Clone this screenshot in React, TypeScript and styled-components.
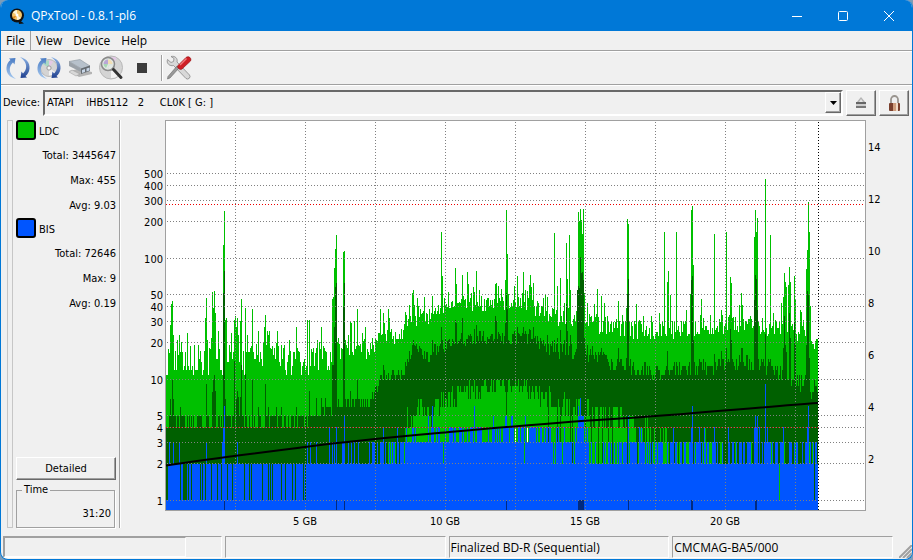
import React from "react";
import styled, { createGlobalStyle } from "styled-components";

const Global = createGlobalStyle`
  * { box-sizing: border-box; }
  html, body { margin: 0; padding: 0; }
  body { background: #7d9cb8; font: 11px/14px "DejaVu Sans Condensed", "Noto Sans", sans-serif; color: #000; }
  button, select { font: inherit; color: inherit; }
`;

const Window = styled.div`
  min-height: 100vh;
  display: flex;
  flex-direction: column;
  background: #f0f0f0;
  border: 1px solid #0078d7;
  border-top: 0;
  border-radius: 8px;
  overflow: hidden;
`;

const TitleBar = styled.header`
  display: flex;
  align-items: center;
  height: 31px;
  padding-left: 8px;
  background: #0078d7;
  color: #fff;
  font: 12px/16px "Open Sans", sans-serif;
`;
const AppTitle = styled.h1`
  flex: 1;
  margin: 0 0 0 6px;
  font: inherit;
`;
const CaptionButton = styled.button`
  width: 46px;
  height: 31px;
  padding: 0;
  border: 0;
  background: none;
  display: grid;
  place-items: center;
`;

const MenuBar = styled.nav`
  display: flex;
  height: 21px;
  border-bottom: 1px solid #fff;
  box-shadow: inset 0 -1px #a0a0a0;
`;
const MenuItem = styled.button<{ $framed?: boolean }>`
  border: 0;
  border-right: 1px solid ${(p) => (p.$framed ? "#a0a0a0" : "transparent")};
  background: none;
  padding: 0 5px;
  height: 19px;
  font: 12px/18px "Open Sans", sans-serif;
`;

const ToolBar = styled.div`
  display: flex;
  align-items: center;
  height: 33px;
  padding-left: 1px;
  border-bottom: 1px solid #a0a0a0;
`;
const ToolButton = styled.button`
  width: 31px;
  height: 30px;
  padding: 0;
  border: 0;
  background: none;
  display: grid;
  place-items: center;
`;
const ToolSeparator = styled.span`
  width: 2px;
  height: 26px;
  margin: 0 0 0 4px;
  border-left: 1px solid #a0a0a0;
  border-right: 1px solid #fff;
`;

const DeviceRow = styled.div`
  display: flex;
  align-items: center;
  height: 35px;
  padding: 0 3px 0 2px;
  border-top: 1px solid #fff;
`;
const DeviceLabel = styled.label`
  width: 40px;
`;
const Combo = styled.div`
  position: relative;
  flex: 1;
  height: 26px;
  border: 2px solid;
  border-color: #696969 #fff #fff #696969;
`;
const DeviceSelect = styled.select`
  appearance: none;
  display: block;
  width: 100%;
  height: 22px;
  padding: 0 20px 0 2px;
  border: 0;
  border-radius: 0;
  background: #f0f0f0;
  outline: 0;
`;
const ComboArrow = styled.span`
  position: absolute;
  top: 0;
  right: 0;
  width: 16px;
  height: 21px;
  background: #f0f0f0;
  border: 1px solid;
  border-color: #fff #696969 #696969 #fff;
  box-shadow: inset -1px -1px #a0a0a0;
  display: grid;
  place-items: center;
  pointer-events: none;
`;
const PushButton = styled.button<{ $wide?: boolean }>`
  width: ${(p) => (p.$wide ? "100px" : "30px")};
  height: ${(p) => (p.$wide ? "23px" : "26px")};
  margin-left: ${(p) => (p.$wide ? "0" : "3px")};
  padding: 0;
  display: grid;
  place-items: center;
  background: #f0f0f0;
  border: 1px solid;
  border-color: #fff #696969 #696969 #fff;
  box-shadow: inset -1px -1px #a0a0a0;
`;

const Main = styled.main`
  flex: 1;
  display: flex;
  align-items: stretch;
`;
const Handle = styled.div`
  width: 6px;
  margin-left: 6px;
  border: 1px solid #c6c6c6;
`;
const Side = styled.aside`
  display: flex;
  flex-direction: column;
  width: 107px;
  padding: 0 3px;
  border-right: 1px solid #a0a0a0;
  box-shadow: 1px 0 #fff;
`;
const Metric = styled.section`
  height: 98px;
`;
const MetricName = styled.h2`
  display: flex;
  align-items: center;
  gap: 3px;
  height: 20px;
  margin: 0 0 3px;
  font: inherit;
  line-height: 18px;
`;
const MetricLabel = styled.span`
  padding-top: 3px;
`;
const Swatch = styled.span<{ $color: string }>`
  width: 20px;
  height: 20px;
  border: 2px solid #000;
  border-radius: 3px;
  background: ${(p) => p.$color};
`;
const MetricValue = styled.p`
  margin: 0;
  height: 25px;
  line-height: 25px;
  text-align: right;
`;
const SideFooter = styled.div`
  margin-top: auto;
`;
const TimeBox = styled.fieldset`
  margin: 3px 1px 0 0;
  height: 45px;
  padding: 10px 3px 0;
  border: 1px solid #a0a0a0;
  box-shadow: 1px 1px #fff;
  text-align: right;
  legend {
    margin-left: 2px;
    padding: 0 2px;
    text-align: left;
  }
`;
const ChartArea = styled.div`
  flex: 1;
  min-width: 0;
  padding-left: 2px;
`;
const ChartSvg = styled.svg`
  display: block;
  width: 100%;
  height: auto;
  font: 11px "DejaVu Sans Condensed", "Noto Sans", sans-serif;
`;

const StatusBar = styled.footer`
  display: flex;
  gap: 3px;
  height: 23px;
  margin-top: 8px;
  padding: 0 0 1px 2px;
`;
const StatusCell = styled.div`
  flex: 1;
  padding: 0 1px;
  font: 12px/21px "Open Sans", sans-serif;
  white-space: nowrap;
  border: 1px solid;
  border-color: #a0a0a0 #fff #fff #a0a0a0;
`;
const ProgressCell = styled(StatusCell)`
  padding: 0;
`;
const ProgressTrack = styled.div`
  width: 84%;
  height: 20px;
  border: 1px solid;
  border-color: #a0a0a0 #fff #fff #a0a0a0;
`;
const Grip = styled.div`
  width: 16px;
  display: flex;
  align-items: flex-end;
  justify-content: flex-end;
`;

/* ---- chart data ---- */

const X0 = 166;
const X1 = 818;
const FLOOR = 510;
const GREEN = "#00c000";
const DARK = "#006000";
const BLUE = "#0055ff";

type Knot = [number, number, number];
const noise = (x: number, seed: number) => {
  const v = Math.sin(x * 12.9898 + seed * 78.233) * 43758.5453;
  return v - Math.floor(v);
};
const along = (knots: Knot[], x: number) => {
  let i = 0;
  while (i < knots.length - 2 && x > knots[i + 1][0]) i++;
  const [ax, ay, aj] = knots[i];
  const [bx, by, bj] = knots[i + 1];
  const t = (x - ax) / (bx - ax);
  return [ay + (by - ay) * t, aj + (bj - aj) * t];
};
/* Error counts are whole numbers, so bar tops snap to the log scale of integers. */
const snap = (y: number) => 501 - 121 * Math.log10(Math.max(1, Math.round(10 ** ((501 - y) / 121))));
const jittered = (knots: Knot[], x: number, seed: number) => {
  const [y, j] = along(knots, x);
  return snap(y + (noise(x, seed) * 2 - 1) * j);
};
const parse = (text: string) => {
  const out: Record<number, number> = {};
  text.trim().split(/\s+/).forEach((pair) => {
    const [x, y] = pair.split(":").map(Number);
    out[x] = y;
  });
  return out;
};
const expand = (text: string) => {
  const out = new Set<number>();
  text.trim().split(/\s+/).forEach((part) => {
    const [a, b] = part.split("-").map(Number);
    for (let x = a; x <= (b || a); x++) out.add(x);
  });
  return out;
};

const ldcPeaks = parse(`
169:353 170:325 171:304 172:301 173:335 175:351 177:340 179:335 181:342 187:333 194:345 198:345 200:351
204:351 205:318 206:298 207:340 209:348 211:338 212:292 213:308 214:291 215:313 218:331 223:245 224:211
225:320 226:318 229:345 231:333 234:320 235:316 236:327 237:318 238:335 240:321 241:299 243:351 245:308
247:335 250:348 252:309 258:331 263:343 264:327 265:315 266:345 267:331 268:335 269:331 270:348 274:348
276:343 277:331 281:345 283:348 284:345 289:340 290:351 296:327 297:348 298:351 307:320 309:320 313:348
315:353 316:348 317:340 319:342 321:327 324:348 325:351 332:299 333:297 334:268 335:249 336:235 337:342
338:338 341:348 343:252 344:251 345:340 346:345 347:348 348:335 350:321 351:323 354:321 357:309 358:345
362:333 363:341 365:327 370:343 372:338 373:345 376:340 378:333 379:333 380:309 381:335 383:313 384:323
388:309 389:318 391:329 401:329 405:312 406:315 409:305 412:293 413:290 414:305 415:316 417:298 418:306
420:309 422:313 424:297 426:313 429:309 432:296 435:308 438:305 441:232 442:276 444:298 446:304 448:292
455:268 456:284 462:275 463:296 467:272 468:284 471:293 473:287 474:292 476:271 479:290 495:284 496:283
498:286 501:289 502:297 505:280 506:210 507:254 508:294 514:286 517:276 518:297 522:293 523:272 525:290
527:291 529:285 530:275 531:287 533:283 543:298 545:295 547:297 553:309 554:233 557:286 560:278 561:316
563:311 564:303 566:243 567:279 569:235 570:290 574:315 577:290 578:212 579:221 580:209 581:220 582:234
583:209 584:293 587:303 594:304 597:289 601:296 604:303 607:316 611:321 618:301 622:315 626:308 627:219
628:224 636:304 639:320 643:316 651:316 659:313 662:321 664:232 667:282 668:271 670:295 672:321 676:232
681:321 686:310 690:294 691:210 692:206 693:265 700:315 701:299 703:318 710:315 714:234 721:310 722:315
726:232 729:315 730:277 731:283 732:318 739:305 741:293 742:305 750:316 754:237 755:210 756:232 757:218
762:318 765:179 770:235 773:313 775:320 781:303 783:297 784:273 785:282 786:287 788:285 789:267 790:282
794:276 795:299 800:310 801:312 803:320 806:269 807:250 808:202 809:232 810:306`);

const ldcTop: Knot[] = [
  [166, 361, 17], [320, 361, 16], [345, 353, 12], [371, 347, 10], [379, 336, 7], [402, 335, 8],
  [410, 318, 9], [430, 317, 10], [442, 307, 8], [470, 305, 8], [520, 302, 7], [538, 309, 8],
  [560, 317, 10], [590, 321, 10], [610, 327, 9], [650, 331, 10], [700, 328, 9], [745, 323, 8],
  [780, 331, 10], [800, 333, 10], [814, 346, 8], [818, 332, 4],
];

const avgPeaks = parse(`
170:399 172:380 173:399 180:407 206:384 212:392 213:380 214:375 215:391 223:293 224:271 225:399 234:361
236:399 237:391 238:397 240:397 241:365 245:374 252:380 258:407 265:384 268:407 276:407 281:407 296:407
309:391 316:398 321:398 325:398 332:365 333:365 334:327 335:287 336:283 343:307 344:283 350:391 357:380
380:375 383:365 384:370 388:373 409:351 412:345 413:340 414:345 417:349 420:348 424:351 432:340 441:327
442:340 448:340 455:320 456:323 461:333 462:318 468:335 474:329 476:325 479:331 480:331 483:331 487:337
492:334 495:316 496:321 498:332 502:333 505:323 506:293 507:309 508:340 514:331 517:327 518:333 522:333
523:327 525:331 529:329 530:330 533:327 534:338 540:338 543:340 547:335 554:340 557:338 560:330 564:340
566:304 567:331 570:335 577:290 578:286 579:288 580:257 581:273 582:272 583:280 584:338 587:345 601:348
604:354 618:348 626:358 627:294 628:279 667:351 691:280 692:276 693:340 714:354 721:351 726:348 730:329
731:340 741:348 742:348 754:300 755:275 756:279 757:310 765:334 783:348 784:316 785:345 786:352 789:313
790:338 794:321 795:345 806:345 807:291 808:295 809:358`);

const avgTop: Knot[] = [
  [166, 422, 7], [305, 422, 6], [318, 413, 5], [350, 402, 6], [370, 400, 5], [378, 386, 7],
  [386, 378, 6], [402, 374, 6], [412, 347, 7], [426, 358, 9], [438, 347, 7], [452, 342, 5],
  [480, 339, 6], [530, 339, 6], [550, 348, 9], [575, 353, 10], [592, 352, 10], [612, 364, 8],
  [655, 372, 8], [690, 369, 9], [740, 362, 7], [765, 365, 9], [782, 374, 6], [800, 382, 9],
  [818, 390, 9],
];

const minTop: Knot[] = [
  [402, 438, 6], [407, 418, 12], [418, 405, 12], [432, 415, 14], [440, 402, 10], [450, 397, 10],
  [462, 391, 10], [485, 388, 10], [515, 385, 7], [535, 392, 10], [550, 399, 13], [568, 409, 14],
  [590, 411, 14],
];

const bisPeaks = parse(`
169:442 173:442 179:442 206:442 222:442 223:427 224:406 237:442 307:442 310:442 316:442 329:427 332:442
334:442 336:427 342:442 343:442 344:416 348:442 351:442 354:442 358:442 369:442 372:442 373:442 374:442
377:442 380:442 381:442 382:442 383:427 385:442 397:427 428:416 432:406 474:406 493:416 505:416 506:416
511:416 512:416 525:416 577:427 578:406 579:416 580:398 581:416 582:416 583:416 628:416 639:427 641:427
673:427 691:427 692:406 699:427 704:427 714:427 728:427 754:427 755:416 756:427 757:416 759:427 765:384
767:427 783:427 807:427 808:406`);

const darkGaps = expand(`166-167 180 183-186 188 191 200 202 205 211 217 221 227 232 244 249 251 262 268
270 272 281 285 292 295 303 305 814`);
const greenGaps = expand("386-388 390 392 395-397 399 404 443 524 553 555 562 572 574 589-590 594 597 599-601");

const bar = (x: number, top: number, bottom: number) => `M${x} ${Math.round(top)}h1V${Math.round(bottom)}h-1z`;

function minLevel(x: number) {
  const r = noise(x, 5);
  const s = noise(x, 6);
  if (x < 385) return null;
  if (x < 404) return r > 0.4 ? 442 : null;
  if (x < 590) {
    if (x === 506 || (x > 535 && r > 0.85)) return null;
    return jittered(minTop, x, 4);
  }
  if (x < 622) return s > 0.62 ? 407 : r > 0.92 ? null : 428;
  if (x < 634) return s > 0.5 ? 416 : r > 0.8 ? null : 428;
  if (x < 655) return s > 0.8 ? 416 : r > 0.55 ? 428 : r > 0.2 ? 442 : null;
  if (x < 672) return s > 0.75 ? 428 : r > 0.2 ? 442 : null;
  if (x < 725) return s > 0.88 ? 428 : r > 0.5 ? 442 : null;
  return r > 0.88 ? 442 : null;
}

function bisLevel(x: number) {
  const r = noise(x, 7);
  if (darkGaps.has(x) || x === 779) return 500;
  if (greenGaps.has(x) || x < 386) return 464;
  if (x >= 589) return r > 0.5 ? 442 : 464;
  if (x < 406) return 442;
  if (x < 437 || x >= 545) return r > 0.8 ? 427 : 442;
  return r > 0.5 ? 427 : 442;
}

function buildLayers() {
  const ldc: string[] = [];
  const avg: string[] = [];
  const min: string[] = [];
  const bis: string[] = [];
  for (let x = X0; x < X1; x++) {
    ldc.push(bar(x, ldcPeaks[x] ?? jittered(ldcTop, x, 1), FLOOR));
    const quiet = noise(x, 2) > 0.48 ? 416 : 428;
    avg.push(bar(x, avgPeaks[x] ?? (x < 312 ? quiet : jittered(avgTop, x, 2)), FLOOR));
    const low = minLevel(x);
    if (low !== null) min.push(bar(x, low, 464));
    bis.push(bar(x, bisPeaks[x] ?? bisLevel(x), FLOOR));
  }
  min.push(bar(779, 464, 500));
  return { ldc: ldc.join(""), avg: avg.join(""), min: min.join(""), bis: bis.join("") };
}
const layers = buildLayers();

const levels: [number, string][] = [
  [174, "500"], [186, "400"], [201, "300"], [222, "200"], [259, "100"], [295, "50"], [307, "40"],
  [322, "30"], [343, "20"], [380, "10"], [416, "5"], [428, "4"], [443, "3"], [464, "2"], [501, "1"],
];
const speeds = [14, 12, 10, 8, 6, 4, 2];
const columns = [235, 305, 375, 445, 515, 585, 655, 725, 795];

function Chart() {
  return (
    <ChartSvg viewBox="122 120 790 408" role="img" aria-label="LDC and BIS error rates over disc capacity">
      <g shapeRendering="crispEdges">
        <rect x="165" y="120" width="701" height="391" fill="#a0a0a0" />
        <rect x="166" y="121" width="699" height="389" fill="#fff" />
        <path d={layers.ldc} fill={GREEN} />
        <path d={layers.avg} fill={DARK} />
        <path d={layers.min} fill={GREEN} />
        <path d={layers.bis} fill={BLUE} />
        <path d="M515 428h1v14h-1zM527 428h1v14h-1z" fill="#fff" />
        <path
          d="M224 500h1v10h-1zM336 500h1v10h-1zM344 500h1v10h-1zM506 500h1v10h-1zM578 500h6v10h-6zM628 500h1v10h-1zM691 500h2v10h-2zM755 500h2v10h-2z"
          fill="#002a80"
        />
        <g stroke="#808080" strokeDasharray="1 2">
          {levels.map(([y]) => (
            <line key={y} x1="167" x2="865" y1={y - 0.5} y2={y - 0.5} />
          ))}
          {columns.map((x) => (
            <line key={x} x1={x + 0.5} x2={x + 0.5} y1="122" y2="510" />
          ))}
        </g>
        <g stroke="#f00000" strokeDasharray="1 2">
          <line x1="166" x2="865" y1="204.5" y2="204.5" />
          <line x1="166" x2="818" y1="427.5" y2="427.5" strokeOpacity="0.8" />
        </g>
        <line x1="818.5" x2="818.5" y1="122" y2="510" stroke="#000" strokeDasharray="1 2" />
      </g>
      <path
        d="M166 465.5C210 459 250 454 305 447S395 437 445 432.500S560 422 620 418.500S760 407 818 403"
        fill="none"
        stroke="#000"
        strokeWidth="2"
      />
      <g textAnchor="end">
        {levels.map(([y, label]) => (
          <text key={label} x="163" y={y + 4}>{label}</text>
        ))}
      </g>
      {speeds.map((s, i) => (
        <text key={s} x="868" y={151 + i * 52}>{s}</text>
      ))}
      <g textAnchor="middle">
        {[5, 10, 15, 20].map((gb) => (
          <text key={gb} x={165 + gb * 28} y="525">{gb} GB</text>
        ))}
      </g>
    </ChartSvg>
  );
}

/* ---- icons ---- */

const AppIcon = () => (
  <svg width="16" height="16" viewBox="0 0 16 16">
    <circle cx="8" cy="7.500" r="7" fill="#111" />
    <path d="M9 11l6 4.500-5 .5z" fill="#111" />
    <circle cx="8" cy="7" r="5" fill="#f5c66a" />
    <path d="M8 7L4 4.500a5 5 0 0 1 4-2.500zM8 7l4 3a5 5 0 0 1-4 2z" fill="#fff3d6" />
    <path d="M8 7L5 11A5 5 0 0 1 3.400 9z" fill="#e48b20" />
    <circle cx="8" cy="7" r="1.500" fill="#fff" />
  </svg>
);

const Arrows = ({ id }: { id: string }) => (
  <>
    <defs>
      <linearGradient id={`${id}-left`} x1="0" y1="1" x2="0" y2="0">
        <stop offset="0" stopColor="#a9cbf0" />
        <stop offset="1" stopColor="#4a7cc4" />
      </linearGradient>
      <linearGradient id={`${id}-right`} x1="0" y1="0" x2="0" y2="1">
        <stop offset="0" stopColor="#8db4e6" />
        <stop offset="1" stopColor="#20408f" />
      </linearGradient>
    </defs>
    <path d="M10 23C3.500 21.500 0 17 .5 11.500 .8 8 2.500 5.500 4.500 4L3 2.500l6.500-.5-1 6.500L7 6.500C3 10 1.500 17.500 10 23z" fill={`url(#${id}-left)`} />
    <path d="M14 1c6.500 1.500 10 6 9.500 11.500-.3 3.500-2 6-4 7.500l1.500 1.500-6.500.5 1-6.500 1.500 2C21 14 22.500 6.500 14 1z" fill={`url(#${id}-right)`} />
  </>
);
const Disc = ({ cx, cy, r }: { cx: number; cy: number; r: number }) => (
  <>
    <circle cx={cx} cy={cy} r={r} fill="#d4d4d4" stroke="#b8b8b8" />
    <path d={`M${cx} ${cy}L${cx - r + 2} ${cy - r / 2}A${r} ${r} 0 0 1 ${cx} ${cy - r + 1}z`} fill="#a9d8c4" />
    <path d={`M${cx} ${cy}L${cx} ${cy - r + 1}A${r} ${r} 0 0 1 ${cx + r / 2} ${cy - r + 2}z`} fill="#e3c9e6" />
    <path d={`M${cx} ${cy}L${cx + r - 2} ${cy + r / 2}A${r} ${r} 0 0 1 ${cx} ${cy + r - 1}z`} fill="#f2f2f2" />
    <circle cx={cx} cy={cy} r={r / 4} fill="#f4f4f4" stroke="#999" />
  </>
);
const RefreshIcon = () => (
  <svg width="24" height="24" viewBox="0 0 24 24"><Arrows id="rescan" /></svg>
);
const RefreshDiscIcon = () => (
  <svg width="24" height="24" viewBox="0 0 24 24"><Disc cx={12} cy={12} r={8.5} /><Arrows id="media" /></svg>
);
const DriveIcon = () => (
  <svg width="24" height="24" viewBox="0 0 24 24">
    <path d="M1 15l10 6 13-3v-2l-14-3z" fill="#b4b4b4" />
    <path d="M1 5.500l11-2L22 10l-8 3z" fill="#b7c1cb" stroke="#8c959e" strokeWidth=".6" />
    <path d="M1 5.500V10l12 6v-3.500z" fill="#9aa1a8" />
    <path d="M13 12.500l9-3V15l-9 3z" fill="#666c72" />
    <path d="M14 14l3-1v3l-3 1zM18.500 12.500l3-1v3l-3 1z" fill="#c7d5e6" />
    <path d="M4 14l8 4-4 2-7-4z" fill="#d8d8d8" stroke="#999" strokeWidth=".5" />
  </svg>
);
const ScanIcon = () => (
  <svg width="26" height="26" viewBox="0 0 26 26">
    <Disc cx={13} cy={12.5} r={11.5} />
    <circle cx="10" cy="9" r="6.500" fill="#e2e9e4" fillOpacity=".9" stroke="#8a8a8a" strokeWidth="1.500" />
    <path d="M5.500 9A4.500 4.500 0 0 1 10 4.500V9z" fill="#b9a6d6" />
    <path d="M10 4.500A4.500 4.500 0 0 1 14.500 9H10z" fill="#f1dfb4" />
    <path d="M5.500 9A4.500 4.500 0 0 0 8 13l2-4z" fill="#a8d8b4" />
    <path d="M15.500 14.500L23 22.500" stroke="#333" strokeWidth="3" strokeLinecap="round" />
  </svg>
);
const ToolsIcon = () => (
  <svg width="26" height="26" viewBox="0 0 26 26">
    <path d="M1.500 4.500l3.500 3 2.500-1L8 3.500 5 1.500c4-1 7 2 6 5.500L23.500 20a2.500 2.500 0 0 1-3.500 3.500L7.500 10.500C4 11.500 0 8.500 1.500 4.500z" fill="#d8d8d8" stroke="#888" strokeWidth=".8" />
    <path d="M13 13L4 23l-2.500 1 .5-2.500L11 11z" fill="#999" stroke="#666" strokeWidth=".6" />
    <path d="M12 10.500L20 2.500c2.500-2 6 .5 4.500 3.500L16 14c-2 1.500-5.500-1.500-4-3.500z" fill="#cf1f25" stroke="#9c1115" strokeWidth=".7" />
    <path d="M14 10l6.500-6.500" stroke="#f07a7c" strokeWidth="1.500" />
  </svg>
);
const EjectIcon = () => (
  <svg width="12" height="14" viewBox="0 0 12 14">
    <path d="M6 1l5 6H1z" fill="#b4b4b4" />
    <path d="M6 3l2 3H4z" fill="#e6e6e6" />
    <rect x="1" y="6" width="10" height="2" fill="#666" />
    <rect x="1" y="8" width="10" height="2" fill="#ccc" />
    <rect x="1" y="10" width="10" height="2" fill="#777" />
  </svg>
);
const LockIcon = () => (
  <svg width="13" height="17" viewBox="0 0 13 17">
    <path d="M3 9V4.500a3.500 3.500 0 0 1 7 0V9" fill="none" stroke="#9a958f" strokeWidth="1.800" />
    <rect x="1" y="8" width="11" height="8" rx="1" fill="#7a3f2c" />
    <rect x="5" y="8" width="5" height="8" fill="#cf9d7c" />
    <rect x="8" y="8" width="2" height="8" fill="#f1dac5" />
  </svg>
);

const metrics = [
  { name: "LDC", color: GREEN, total: "3445647", max: "455", avg: "9.03" },
  { name: "BIS", color: BLUE, total: "72646", max: "9", avg: "0.19" },
];

export default function App() {
  return (
    <>
      <Global />
      <Window>
        <TitleBar>
          <AppIcon />
          <AppTitle>QPxTool - 0.8.1-pl6</AppTitle>
          <CaptionButton aria-label="Minimize">
            <svg width="12" height="12"><path d="M1 6.500h10" stroke="#fff" /></svg>
          </CaptionButton>
          <CaptionButton aria-label="Maximize">
            <svg width="12" height="12"><rect x="1.500" y="1.500" width="9" height="9" rx="1" fill="none" stroke="#fff" /></svg>
          </CaptionButton>
          <CaptionButton aria-label="Close">
            <svg width="12" height="12"><path d="M1 1l10 10M11 1L1 11" stroke="#fff" /></svg>
          </CaptionButton>
        </TitleBar>

        <MenuBar>
          <MenuItem $framed>File</MenuItem>
          <MenuItem>View</MenuItem>
          <MenuItem>Device</MenuItem>
          <MenuItem>Help</MenuItem>
        </MenuBar>

        <ToolBar>
          <ToolButton aria-label="Rescan devices"><RefreshIcon /></ToolButton>
          <ToolButton aria-label="Update media info"><RefreshDiscIcon /></ToolButton>
          <ToolButton aria-label="Device controls"><DriveIcon /></ToolButton>
          <ToolButton aria-label="Scan"><ScanIcon /></ToolButton>
          <ToolButton aria-label="Stop">
            <svg width="10" height="10"><rect width="10" height="10" fill="#3c3c3c" /></svg>
          </ToolButton>
          <ToolSeparator />
          <ToolButton aria-label="Preferences"><ToolsIcon /></ToolButton>
        </ToolBar>

        <DeviceRow>
          <DeviceLabel htmlFor="device">Device:</DeviceLabel>
          <Combo>
            <DeviceSelect id="device">
              <option>{"ATAPI\u00a0\u00a0\u00a0 iHBS112\u00a0\u00a0 2\u00a0\u00a0\u00a0\u00a0 CL0K [ G: ]"}</option>
            </DeviceSelect>
            <ComboArrow>
              <svg width="7" height="4"><path d="M0 0h7L3.500 4z" fill="#000" /></svg>
            </ComboArrow>
          </Combo>
          <PushButton aria-label="Eject"><EjectIcon /></PushButton>
          <PushButton aria-label="Lock"><LockIcon /></PushButton>
        </DeviceRow>

        <Main>
          <Handle />
          <Side>
            {metrics.map((m) => (
              <Metric key={m.name}>
                <MetricName><Swatch $color={m.color} /><MetricLabel>{m.name}</MetricLabel></MetricName>
                <MetricValue>Total: {m.total}</MetricValue>
                <MetricValue>Max: {m.max}</MetricValue>
                <MetricValue>Avg: {m.avg}</MetricValue>
              </Metric>
            ))}
            <SideFooter>
              <PushButton $wide>Detailed</PushButton>
              <TimeBox>
                <legend>Time</legend>
                31:20
              </TimeBox>
            </SideFooter>
          </Side>
          <ChartArea><Chart /></ChartArea>
        </Main>

        <StatusBar>
          <ProgressCell><ProgressTrack /></ProgressCell>
          <StatusCell />
          <StatusCell>Finalized BD-R (Sequential)</StatusCell>
          <StatusCell>CMCMAG-BA5/000</StatusCell>
          <Grip>
            <svg width="13" height="13">
              <path d="M0 13L13 0M4 13L13 4M8 13L13 8" stroke="#a0a0a0" strokeWidth="2" />
            </svg>
          </Grip>
        </StatusBar>
      </Window>
    </>
  );
}
